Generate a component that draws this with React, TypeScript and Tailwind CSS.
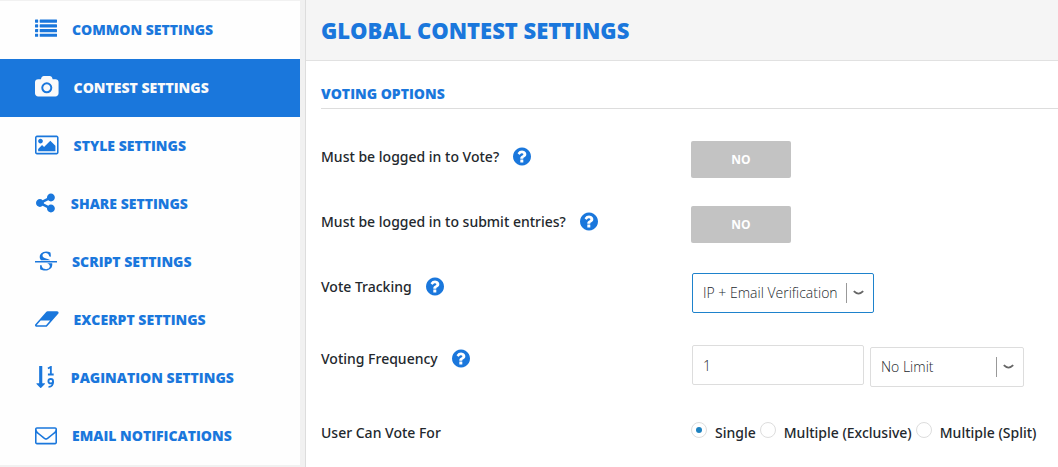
import { useState, type ReactNode } from "react";
import clsx from "clsx";

interface IconProps {
  width: number;
  left?: number;
  children: ReactNode;
}

// all sidebar glyphs share a 1792 unit tall box
function NavIcon({ width, left = 0, children }: IconProps) {
  return (
    <svg
      viewBox={`${left} 0 ${width} 1792`}
      className="mb-0.5 h-[22px] w-auto shrink-0"
      fill="currentColor"
      aria-hidden="true"
    >
      {children}
    </svg>
  );
}

const navItems = [
  {
    label: "Common Settings",
    icon: (
      <NavIcon width={1792}>
        {[128, 512, 896, 1280].map((y) => (
          <g key={y}>
            <rect x="0" y={y} width="256" height="256" rx="32" />
            <rect x="384" y={y} width="1408" height="256" rx="32" />
          </g>
        ))}
      </NavIcon>
    ),
  },
  {
    label: "Contest Settings",
    icon: (
      <NavIcon width={1920}>
        <path d="M960 672q119 0 203.5 84.5t84.5 203.5-84.5 203.5-203.5 84.5-203.5-84.5-84.5-203.5 84.5-203.5 203.5-84.5zm704-416q106 0 181 75t75 181v896q0 106-75 181t-181 75h-1408q-106 0-181-75t-75-181v-896q0-106 75-181t181-75h224l51-136q19-49 69.5-84.5t103.5-35.5h512q53 0 103.5 35.5t69.5 84.5l51 136h224zm-704 1152q185 0 316.5-131.5t131.5-316.5-131.5-316.5-316.5-131.5-316.5 131.5-131.5 316.5 131.5 316.5 316.5 131.5z" />
      </NavIcon>
    ),
  },
  {
    label: "Style Settings",
    icon: (
      <NavIcon width={1920}>
        <path d="M640 576q0 80-56 136t-136 56-136-56-56-136 56-136 136-56 136 56 56 136zm1024 384v448h-1408v-192l320-320 160 160 512-512zm96-704h-1600q-13 0-22.5 9.5t-9.5 22.5v1216q0 13 9.5 22.5t22.5 9.5h1600q13 0 22.5-9.5t9.5-22.5v-1216q0-13-9.5-22.5t-22.5-9.5zm160 32v1216q0 66-47 113t-113 47h-1600q-66 0-113-47t-47-113v-1216q0-66 47-113t113-47h1600q66 0 113 47t47 113z" />
      </NavIcon>
    ),
  },
  {
    label: "Share Settings",
    icon: (
      <NavIcon width={1700} left={-82}>
        <path d="M1216 1024q133 0 226.5 93.5t93.5 226.5-93.5 226.5-226.5 93.5-226.5-93.5-93.5-226.5q0-12 2-34l-360-180q-92 86-218 86-133 0-226.5-93.5t-93.5-226.5 93.5-226.5 226.5-93.5q126 0 218 86l360-180q-2-22-2-34 0-133 93.5-226.5t226.5-93.5 226.5 93.5 93.5 226.5-93.5 226.5-226.5 93.5q-126 0-218-86l-360 180q2 22 2 34t-2 34l360 180q92-86 218-86z" />
      </NavIcon>
    ),
  },
  {
    label: "Script Settings",
    icon: (
      <NavIcon width={1792}>
        <path d="M1760 896q14 0 23 9t9 23v64q0 14-9 23t-23 9h-1728q-14 0-23-9t-9-23v-64q0-14 9-23t23-9h1728zm-1277-64q-28-35-51-80-48-97-48-188 0-181 134-309 133-127 393-127 50 0 167 19 66 12 177 48 10 38 21 118 14 123 14 183 0 18-5 45l-12 3-84-6-14-2q-50-149-103-205-88-91-210-91-114 0-182 59-67 58-67 146 0 73 66 140t279 129q69 20 173 66 58 28 95 52h-743zm507 256h411q7 39 7 92 0 111-41 212-23 55-71 104-37 35-109 81-80 48-153 66-80 21-203 21-114 0-195-23l-140-40q-57-16-72-28-8-8-8-22v-13q0-108-2-156-1-30 0-68l2-37v-44l102-2q15 34 30 71t22.5 56 12.5 27q35 57 80 94 43 36 105 57 59 22 132 22 64 0 139-27 77-26 122-86 47-61 47-129 0-84-81-157-34-29-137-71z" />
      </NavIcon>
    ),
  },
  {
    label: "Excerpt Settings",
    icon: (
      <NavIcon width={1920}>
        <path d="M896 1408l336-384h-768l-336 384h768zm1013-1077q15 34 9.5 71.5t-30.5 65.5l-896 1024q-38 44-96 44h-768q-38 0-69.5-20.5t-47.5-54.5q-15-34-9.5-71.5t30.5-65.5l896-1024q38-44 96-44h768q38 0 69.5 20.5t47.5 54.5z" />
      </NavIcon>
    ),
  },
  {
    label: "Pagination Settings",
    icon: (
      <NavIcon width={1700} left={-82}>
        <path d="M736 1440q0 12-10 24l-319 319q-10 9-23 9-12 0-23-9l-320-320q-15-16-7-35 8-20 30-20h192v-1376q0-14 9-23t23-9h192q14 0 23 9t9 23v1376h192q14 0 23 9t9 23z" />
        <g fill="none" stroke="currentColor" strokeWidth="150">
          <path d="M970 200L1210 75V690M970 690H1440" />
          <ellipse cx="1200" cy="1240" rx="190" ry="180" />
          <path d="M1390 1240Q1400 1710 1020 1700" />
        </g>
      </NavIcon>
    ),
  },
  {
    label: "Email Notifications",
    icon: (
      <NavIcon width={1792}>
        <path d="M1664 1504v-768q-32 36-69 66-268 206-426 338-51 43-83 67t-86.5 48.5-102.5 24.5h-2q-48 0-102.5-24.5t-86.5-48.5-83-67q-158-132-426-338-37-30-69-66v768q0 13 9.5 22.5t22.5 9.5h1472q13 0 22.5-9.5t9.5-22.5zm0-1051v-24.5l-.5-13-3-12.5-5.5-9-9-7.5-14-2.5h-1472q-13 0-22.5 9.5t-9.5 22.5q0 168 147 284 193 152 401 317 6 5 35 29.5t46 37.5 44.5 31.5 50.5 27.5 43 9h2q20 0 43-9t50.5-27.5 44.5-31.5 46-37.5 35-29.5q208-165 401-317 54-43 100.5-115.5t46.5-131.5zm128-37v1088q0 66-47 113t-113 47h-1472q-66 0-113-47t-47-113v-1088q0-66 47-113t113-47h1472q66 0 113 47t47 113z" />
      </NavIcon>
    ),
  },
];

function HelpButton({ topic }: { topic: string }) {
  return (
    <button type="button" aria-label={`Help: ${topic}`} className="text-[#1a77dc]">
      <svg viewBox="0 0 1536 1792" className="h-[21px] w-[18px]" fill="currentColor" aria-hidden="true">
        <path d="M880 1376v-192q0-14-9-23t-23-9h-192q-14 0-23 9t-9 23v192q0 14 9 23t23 9h192q14 0 23-9t9-23zm256-672q0-88-55.5-163t-138.5-116-170-41q-243 0-371 213-15 24 8 42l132 100q7 6 19 6 16 0 25-12 53-68 86-92 34-24 86-24 48 0 85.5 26t37.5 59q0 38-20 61t-68 45q-63 28-115.5 86.5t-52.5 125.5v36q0 14 9 23t23 9h192q14 0 23-9t9-23q0-19 21.5-49.5t54.5-49.5q32-18 49-28.5t46-35 44.5-48 28-60.5 12.5-81zm400 192q0 209-103 385.5t-279.5 279.5-385.5 103-385.5-103-279.5-279.5-103-385.5 103-385.5 279.5-279.5 385.5-103 385.5 103 279.5 279.5 103 385.5z" />
      </svg>
    </button>
  );
}

function Row({ label, id, children }: { label: string; id: string; children: ReactNode }) {
  return (
    <div className="flex items-start">
      <div className="flex w-[370px] shrink-0 items-center gap-3.5 pt-[5px]">
        <label htmlFor={id} className="leading-[21px]">
          {label}
        </label>
        <HelpButton topic={label} />
      </div>
      {children}
    </div>
  );
}

function Toggle({ id }: { id: string }) {
  const [on, setOn] = useState(false);
  return (
    <button
      id={id}
      type="button"
      aria-pressed={on}
      onClick={() => setOn(!on)}
      className={clsx(
        "h-[37px] w-[100px] rounded-xs font-['Open_Sans',sans-serif] text-xs font-bold text-white",
        on ? "bg-[#1a77dc]" : "bg-[#c3c3c3]"
      )}
    >
      {on ? "YES" : "NO"}
    </button>
  );
}

interface SelectProps {
  id: string;
  options: string[];
  label?: string;
  active?: boolean;
  wide?: boolean;
}

function Select({ id, options, label, active, wide }: SelectProps) {
  return (
    <div className={clsx("relative", wide ? "w-[182px]" : "w-[154px]")}>
      <select
        id={id}
        aria-label={label}
        className={clsx(
          "h-10 w-full appearance-none rounded-xs border bg-white pl-2.5 pr-8 font-['Open_Sans',sans-serif] font-light text-[#23282d]",
          active ? "border-[#1e82cc]" : "border-[#ddd]"
        )}
      >
        {options.map((option) => (
          <option key={option}>{option}</option>
        ))}
      </select>
      <span className="pointer-events-none absolute inset-y-2.5 right-2.5 flex items-center gap-1.5 border-l border-[#999] pl-1.5">
        <svg viewBox="0 0 11 6" className="h-1.5 w-[11px]" fill="none" stroke="#666" strokeWidth="1.8" aria-hidden="true">
          <path d="M0.8 1.2Q5.5 6 10.2 1.2" />
        </svg>
      </span>
    </div>
  );
}

const voteModes = ["Single", "Multiple (Exclusive)", "Multiple (Split)"];

export default function App() {
  const [current, setCurrent] = useState("Contest Settings");
  const [mode, setMode] = useState("Single");

  return (
    <div className="flex min-h-screen items-stretch bg-[#f1f1f1] font-['Open_Sans',sans-serif] text-sm text-[#23282d]">
      <nav className="mr-[5px] w-[300px] shrink-0 self-start bg-[#fefefe] mt-px">
        {navItems.map(({ label, icon }) => (
          <a
            key={label}
            href="#"
            onClick={() => setCurrent(label)}
            className={clsx(
              "flex h-[58px] items-center gap-[15px] pl-[35px] font-extrabold uppercase",
              current === label ? "bg-[#1a77dc] text-[#fafafa]" : "text-[#1a77dc]"
            )}
          >
            {icon}
            {label}
          </a>
        ))}
      </nav>

      <main className="min-w-0 flex-1 border-l border-[#ddd] bg-white">
        <header className="border-b border-[#e1e1e1] bg-[#f5f5f5] px-[15px] py-[15px]">
          <h1 className="text-[22px] leading-[30px] font-extrabold text-[#1a77dc]">
            GLOBAL CONTEST SETTINGS
          </h1>
        </header>

        <form className="pl-[15px] pt-[22px]" onSubmit={(e) => e.preventDefault()}>
          <h2 className="border-b border-[#ddd] pb-1 leading-[21px] font-extrabold text-[#1a77dc]">
            VOTING OPTIONS
          </h2>

          <div className="flex flex-col pt-8 font-['Noto_Sans',sans-serif] font-medium">
            <div className="h-[65px]">
              <Row label="Must be logged in to Vote?" id="login-vote">
                <Toggle id="login-vote" />
              </Row>
            </div>
            <div className="h-[65px]">
              <Row label="Must be logged in to submit entries?" id="login-submit">
                <Toggle id="login-submit" />
              </Row>
            </div>
            <div className="h-[72px]">
              <Row label="Vote Tracking" id="tracking">
                <div className="pl-px pt-0.5">
                  <Select
                    id="tracking"
                    options={["IP + Email Verification", "IP", "Email"]}
                    active
                    wide
                  />
                </div>
              </Row>
            </div>
            <div className="h-[74px]">
              <Row label="Voting Frequency" id="frequency">
                <div className="flex items-start gap-1.5 pl-px pt-0.5">
                  <input
                    id="frequency"
                    type="text"
                    defaultValue="1"
                    className="h-10 w-[172px] rounded-xs border border-[#ddd] px-2.5 font-['Open_Sans',sans-serif] font-light text-[#23282d]"
                  />
                  <div className="pt-0.5">
                    <Select id="limit" label="Frequency limit" options={["No Limit", "Per Day", "Per Hour"]} />
                  </div>
                </div>
              </Row>
            </div>
            <fieldset className="flex items-start pt-[5px]">
              <legend className="float-left w-[370px] shrink-0 leading-[21px]">User Can Vote For</legend>
              <div className="flex gap-1 whitespace-nowrap">
                {voteModes.map((item) => (
                  <label key={item} className="flex items-start gap-2 leading-[21px]">
                    <input
                      type="radio"
                      name="vote-mode"
                      checked={mode === item}
                      onChange={() => setMode(item)}
                      className="grid size-4 shrink-0 appearance-none place-items-center rounded-full border border-[#ddd] bg-white checked:before:size-1.5 checked:before:rounded-full checked:before:bg-[#1e82c0]"
                    />
                    {item}
                  </label>
                ))}
              </div>
            </fieldset>
          </div>
        </form>
      </main>
    </div>
  );
}
